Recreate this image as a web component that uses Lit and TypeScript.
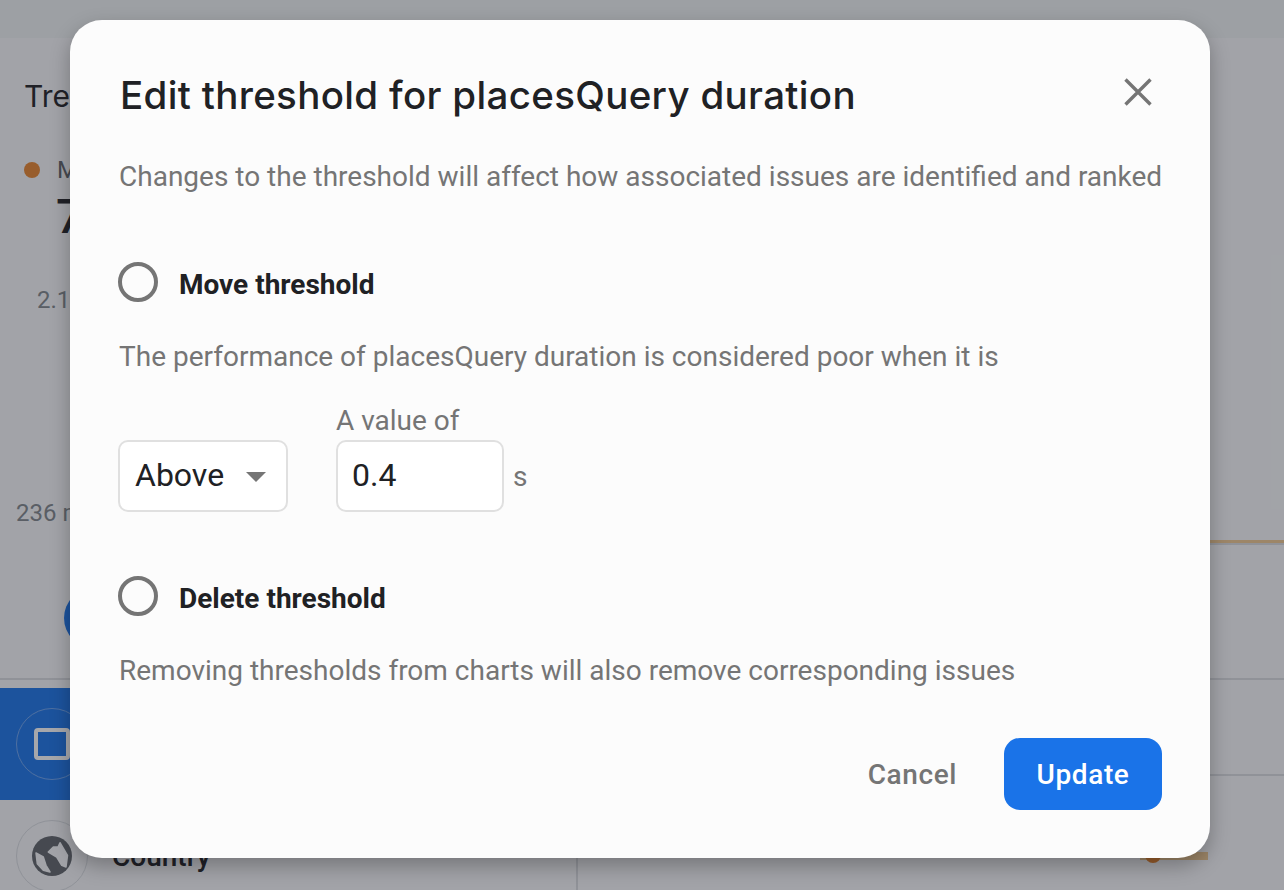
import { LitElement, html, css } from "lit";
import { customElement } from "lit/decorators.js";

@customElement("app-root")
export class AppRoot extends LitElement {
  static styles = css`
    :host { display: block; width: 1284px; height: 890px; position: relative; overflow: hidden; font-family: Roboto, "Liberation Sans", sans-serif; background: #f8f9fa; color: #202124; }
    * { box-sizing: border-box; }
    .page { height: 890px; display: flex; flex-direction: column; }
    .topbar { height: 38px; background: #f1f3f4; flex: none; }
    .upper { height: 642px; flex: none; border-bottom: 2px solid #dadce0; padding: 40px 0 0 24px; position: relative; display: flex; flex-direction: column; }
    .trend { font-family: Inter, Roboto, sans-serif; font-size: 30px; line-height: 36px; }
    .legend { display: flex; align-items: center; gap: 17px; margin-top: 42px; font-size: 24px; line-height: 28px; color: #5f6368; }
    .dot { width: 16px; height: 16px; border-radius: 50%; background: #e8842c; flex: none; }
    .big { font-size: 48px; line-height: 52px; font-weight: 500; padding-left: 32px; margin-top: 7px; }
    .axis { font-size: 24px; line-height: 28px; color: #80868b; }
    .a1 { margin: 43px 0 0 13px; }
    .a2 { margin: 185px 0 0 -8px; }
    .fab { width: 60px; height: 60px; border-radius: 50%; background: #1a73e8; margin: 61px 0 0 40px; flex: none; }
    .chartline { position: absolute; right: 0; top: 502px; width: 90px; height: 5px; background: #dadce0; border-top: 3px solid #f0c890; }
    .lower { display: flex; flex: 1; margin-top: 8px; min-height: 0; }
    .left { width: 578px; flex: none; border-right: 2px solid #dadce0; }
    .row { height: 112px; display: flex; align-items: center; padding-left: 16px; gap: 24px; font-size: 28px; font-weight: 500; flex: none; }
    .row.active { background: #1a73e8; color: #fff; }
    .row.next { height: 90px; align-items: flex-start; padding-top: 20px; }
    .circle { width: 72px; height: 72px; border-radius: 50%; border: 1px solid #dadce0; display: grid; place-items: center; flex: none; }
    .active .circle { border-color: #6ea4ee; }
    .country { padding-top: 20px; }
    .right { flex: 1; display: flex; flex-direction: column; }
    .rrow { height: 88px; border-bottom: 2px solid #dadce0; flex: none; }
    .rchart { flex: 1; display: flex; justify-content: flex-end; padding: 76px 0 0 0; position: relative; }
    .rbar { width: 68px; height: 8px; background: #f0c890; margin-right: 76px; }
    .rdot { position: absolute; left: 567px; top: 71px; width: 16px; height: 16px; border-radius: 50%; background: #e8842c; }

    .scrim { position: absolute; inset: 0; background: rgba(32, 36, 44, 0.4); }
    .dialog { position: absolute; left: 70px; top: 20px; width: 1140px; height: 838px; background: #fcfcfc; border-radius: 32px; box-shadow: 0 8px 20px rgba(0,0,0,.28); padding: 46px 48px 48px 48px; display: flex; flex-direction: column; }
    .head { display: flex; justify-content: space-between; align-items: flex-start; height: 60px; padding-left: 2px; }
    h2 { margin: 0; font-family: Inter, Roboto, sans-serif; font-weight: 500; font-size: 38.5px; line-height: 58px; color: #202124; letter-spacing: .33px; white-space: nowrap; }
    .close { width: 32px; height: 32px; margin: 10px 8px 0 0; flex: none; display: block; }
    .sub { margin: 31px 0 0 1px; font-size: 28px; line-height: 40px; color: #757575; white-space: nowrap; }
    .radio { display: flex; align-items: center; gap: 21px; font-size: 28px; font-weight: 700; color: #202124; height: 40px; }
    .radio-label { line-height: 35px; padding-top: 5px; }
    .ring { width: 40px; height: 40px; border-radius: 50%; border: 4px solid #757575; flex: none; }
    .r1 { margin-top: 65px; }
    .r2 { margin-top: 64px; }
    .desc { margin: 35px 0 0 1px; font-size: 28px; line-height: 40px; color: #757575; white-space: nowrap; }
    .fields { display: flex; align-items: flex-end; gap: 48px; margin-top: 24px; }
    .field { display: flex; flex-direction: column; }
    .label { font-size: 28px; line-height: 39px; color: #757575; }
    .box { height: 72px; background: #fff; border: 2px solid #e0e0e0; border-radius: 10px; display: flex; align-items: center; font-size: 32px; color: #202124; padding: 0 0 2px 14px; }
    .select { width: 170px; gap: 22px; padding-left: 15px; }
    .caret { width: 0; height: 0; border-left: 10px solid transparent; border-right: 10px solid transparent; border-top: 10px solid #757575; margin-top: 3px; }
    .input { width: 168px; }
    .unitwrap { display: flex; align-items: center; gap: 9px; }
    .unit { font-size: 28px; color: #757575; }
    .actions { margin-top: auto; display: flex; justify-content: flex-end; align-items: center; gap: 47px; }
    .cancel { font-size: 28px; font-weight: 500; color: #757575; letter-spacing: .6px; }
    .update { width: 158px; height: 72px; background: #1a73e8; color: #fff; border-radius: 16px; display: grid; place-items: center; font-size: 28px; font-weight: 500; letter-spacing: .6px; }
  `;

  render() {
    return html`
      <div class="page">
        <div class="topbar"></div>
        <div class="upper">
          <div class="trend">Trends</div>
          <div class="legend"><span class="dot"></span><span>Median</span></div>
          <div class="big">7</div>
          <div class="axis a1">2.1 s</div>
          <div class="axis a2">236 ms</div>
          <div class="fab"></div>
          <div class="chartline"></div>
        </div>
        <div class="lower">
          <div class="left">
            <div class="row active">
              <div class="circle">
                <svg width="36" height="32" viewBox="0 0 36 32"><rect x="2" y="2" width="32" height="28" rx="2" fill="none" stroke="#fff" stroke-width="4"/></svg>
              </div>
              <span>Device</span>
            </div>
            <div class="row next">
              <div class="circle">
                <svg width="40" height="40" viewBox="0 0 40 40">
                  <circle cx="20" cy="20" r="20" fill="#5f6368"/>
                  <g fill="#f8f9fa" stroke="#f8f9fa" stroke-width="1.5" stroke-linejoin="round">
                    <polygon points="4,17 11.3,21 14,29.3 18,36 11.3,34.3 5.3,27.7"/>
                    <polygon points="28,6.7 35.5,19.3 34,31 29.7,29.3 24.7,21 16.3,16 21.3,11 26,11"/>
                  </g>
                </svg>
              </div>
              <span class="country">Country</span>
            </div>
          </div>
          <div class="right">
            <div class="rrow"></div>
            <div class="rchart"><div class="rbar"></div><div class="rdot"></div></div>
          </div>
        </div>
      </div>
      <div class="scrim"></div>
      <div class="dialog" role="dialog">
        <div class="head">
          <h2>Edit threshold for placesQuery duration</h2>
          <svg class="close" viewBox="0 0 32 32"><path d="M3.5 3.5 L28.5 28.5 M28.5 3.5 L3.5 28.5" stroke="#757575" stroke-width="3.4" fill="none"/></svg>
        </div>
        <div class="sub">Changes to the threshold will affect how associated issues are identified and ranked</div>
        <div class="radio r1"><span class="ring"></span><span class="radio-label">Move threshold</span></div>
        <div class="desc">The performance of placesQuery duration is considered poor when it is</div>
        <div class="fields">
          <div class="box select"><span>Above</span><span class="caret"></span></div>
          <div class="field">
            <div class="label">A value of</div>
            <div class="unitwrap"><div class="box input">0.4</div><span class="unit">s</span></div>
          </div>
        </div>
        <div class="radio r2"><span class="ring"></span><span class="radio-label">Delete threshold</span></div>
        <div class="desc">Removing thresholds from charts will also remove corresponding issues</div>
        <div class="actions">
          <span class="cancel">Cancel</span>
          <div class="update">Update</div>
        </div>
      </div>
    `;
  }
}
